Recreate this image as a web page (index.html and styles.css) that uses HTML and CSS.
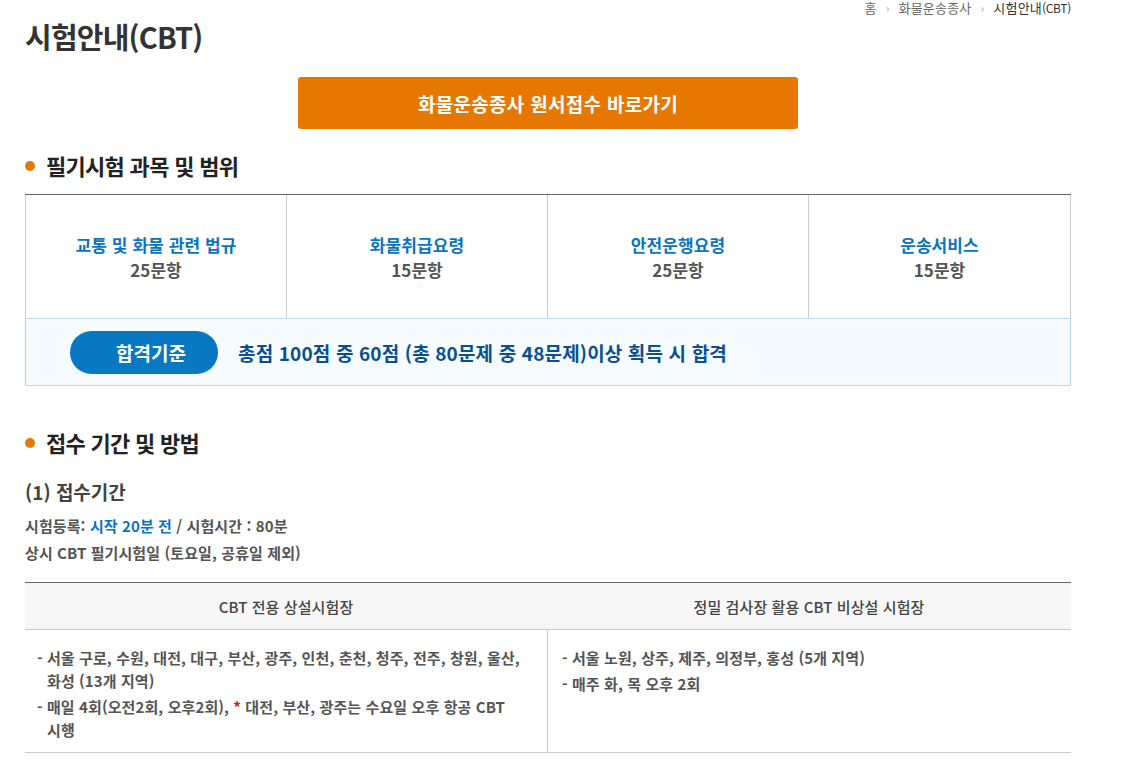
FILE: index.html
```html
<!DOCTYPE html>
<html lang="ko">
<head>
<meta charset="utf-8">
<title>시험안내(CBT)</title>
<link rel="stylesheet" href="styles.css">
</head>
<body>
<div class="page">
  <div class="top">
    <h1 class="title">시험안내(CBT)</h1>
    <nav class="crumbs">
      <span>홈</span><span class="sep">›</span><span>화물운송종사</span><span class="sep">›</span><span class="cur">시험안내<small>(CBT)</small></span>
    </nav>
  </div>

  <div class="btn-wrap"><a class="apply-btn" href="#">화물운송종사 원서접수 바로가기</a></div>

  <h2 class="sec-title"><span class="dot"></span>필기시험 과목 및 범위</h2>
  <div class="subjects">
    <div class="subj-row">
      <div class="subj"><div class="subj-name">교통 및 화물 관련 법규</div><div class="subj-count">25문항</div></div>
      <div class="subj"><div class="subj-name">화물취급요령</div><div class="subj-count">15문항</div></div>
      <div class="subj"><div class="subj-name">안전운행요령</div><div class="subj-count">25문항</div></div>
      <div class="subj"><div class="subj-name">운송서비스</div><div class="subj-count">15문항</div></div>
    </div>
    <div class="pass">
      <span class="pill">합격기준</span>
      <span class="pass-text">총점 100점 중 60점 (총 80문제 중 48문제)이상 획득 시 합격</span>
    </div>
  </div>

  <h2 class="sec-title sec2"><span class="dot"></span>접수 기간 및 방법</h2>
  <h3 class="sub-title">(1) 접수기간</h3>
  <p class="info first">시험등록: <span class="blue">시작 20분 전</span> / 시험시간 : 80분</p>
  <p class="info">상시 CBT 필기시험일 (토요일, 공휴일 제외)</p>

  <div class="sites">
    <div class="sites-head">
      <div class="th">CBT 전용 상설시험장</div>
      <div class="th">정밀 검사장 활용 CBT 비상설 시험장</div>
    </div>
    <div class="sites-body">
      <ul class="td">
        <li>서울 구로, 수원, 대전, 대구, 부산, 광주, 인천, 춘천, 청주, 전주, 창원, 울산, 화성 (13개 지역)</li>
        <li>매일 4회(오전2회, 오후2회), <span class="red">*</span> 대전, 부산, 광주는 수요일 오후 항공 CBT 시행</li>
      </ul>
      <ul class="td">
        <li>서울 노원, 상주, 제주, 의정부, 홍성 (5개 지역)</li>
        <li>매주 화, 목 오후 2회</li>
      </ul>
    </div>
  </div>
</div>
</body>
</html>
```

FILE: styles.css
```css
* { box-sizing: border-box; }
html, body { margin: 0; padding: 0; background: #fff; }
body {
  font-family: "Noto Sans CJK KR", "Noto Sans", sans-serif;
  color: #333;
}
.page {
  width: 1046px;
  margin-left: 25px;
}
.top {
  display: flex;
  justify-content: space-between;
  align-items: flex-start;
}
.title {
  margin: 16px 0 0 0;
  font-size: 29px;
  line-height: 40px;
  font-weight: 700;
  color: #333;
  letter-spacing: -0.8px;
}
.crumbs {
  display: flex;
  gap: 9px;
  font-size: 13px;
  line-height: 15px;
  color: #666;
  margin-top: 0;
  letter-spacing: 0.2px;
}
.crumbs .sep { color: #aaa; font-size: 12px; }
.crumbs .cur { color: #333; }
.crumbs small { font-size: 12px; letter-spacing: -0.3px; }
.btn-wrap {
  display: flex;
  justify-content: center;
  margin-top: 21px;
}
.apply-btn {
  display: flex;
  align-items: center;
  justify-content: center;
  width: 500px;
  height: 52px;
  background: #e67700;
  border-radius: 3px;
  color: #fff;
  font-size: 19px;
  font-weight: 700;
  text-decoration: none;
  letter-spacing: 0.3px;
}
.sec-title {
  display: flex;
  align-items: center;
  margin: 20px 0 0 0;
  font-size: 22px;
  line-height: 32px;
  font-weight: 700;
  color: #222;
  letter-spacing: -0.7px;
}
.sec-title .dot {
  width: 10px;
  height: 10px;
  border-radius: 50%;
  background: #e67700;
  margin-right: 11px;
  margin-top: 2px;
}
.subjects {
  margin-top: 13px;
  border-top: 1px solid #666;
}
.subj-row {
  display: grid;
  grid-template-columns: repeat(4, 1fr);
  border-left: 1px solid #ccc;
  border-right: 1px solid #ccc;
}
.subj {
  height: 123px;
  display: flex;
  flex-direction: column;
  align-items: center;
  justify-content: center;
  border-right: 1px solid #ccc;
  font-size: 17px;
  font-weight: 700;
  line-height: 25px;
  letter-spacing: 0.1px;
}
.subj:last-child { border-right: none; }
.subj-name { color: #0b74bd; }
.subj-count { color: #555; }
.pass {
  display: flex;
  align-items: center;
  height: 68px;
  background: #f5fbff;
  border: 1px solid #b9d6ee;
  padding-left: 44px;
}
.pill {
  display: flex;
  align-items: center;
  justify-content: center;
  width: 148px;
  height: 43px;
  border-radius: 22px;
  background: #0878c2;
  color: #fff;
  font-size: 19px;
  font-weight: 700;
  padding-left: 14px;
}
.pass-text {
  margin-left: 20px;
  font-size: 19px;
  font-weight: 700;
  color: #0a4f8e;
  letter-spacing: 0.15px;
}
.sec2 { margin-top: 40px; }
.sub-title {
  margin: 19px 0 0 0;
  font-size: 19px;
  line-height: 30px;
  font-weight: 700;
  color: #444;
}
.info {
  margin: 0;
  font-size: 15px;
  line-height: 27px;
  font-weight: 700;
  color: #555;
  letter-spacing: 0.1px;
}
.info.first { margin-top: 5px; }
.blue { color: #0b74bd; }
.sites {
  margin-top: 16px;
  border-top: 1px solid #666;
  border-bottom: 1px solid #ccc;
}
.sites-head {
  display: grid;
  grid-template-columns: 522px 1fr;
  background: #f7f7f7;
  border-bottom: 1px solid #ccc;
}
.th {
  height: 46px;
  display: flex;
  align-items: center;
  justify-content: center;
  font-size: 15px;
  font-weight: 500;
  color: #444;
  letter-spacing: 0.1px;
}
.sites-body {
  display: grid;
  grid-template-columns: 522px 1fr;
}
.td {
  list-style: none;
  margin: 0;
  padding: 16px 22px 11px 12px;
  font-size: 15px;
  line-height: 23px;
  font-weight: 700;
  color: #555;
  letter-spacing: 0.1px;
  word-break: keep-all;
}
.td + .td {
  border-left: 1px solid #ccc;
  padding-left: 14px;
}
.td li {
  padding-left: 10px;
  text-indent: -10px;
}
.td li + li { margin-top: 3px; }
.td li::before { content: "- "; }
.red { color: #e01010; }
```
